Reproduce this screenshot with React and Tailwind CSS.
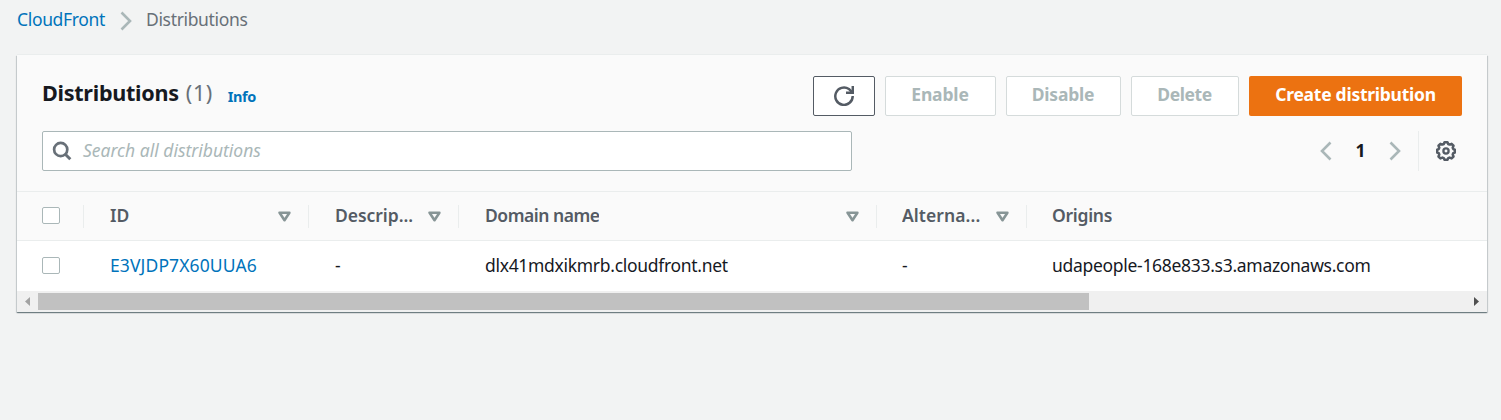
function Chevron({ left = false }) {
  return (
    <svg viewBox="0 0 12 20" className="h-5 w-3 shrink-0" fill="none" stroke="#aab7b8" strokeWidth="2.600">
      <path d={left ? "M10.500 1.500 2 10l8.500 8.500" : "M1.500 1.500 10 10l-8.500 8.500"} />
    </svg>
  );
}

function RefreshIcon() {
  return (
    <svg viewBox="0 0 20 20" className="size-5" fill="none" stroke="#545b64" strokeWidth="2.500">
      <path d="M18.700 10A8.700 8.700 0 1 1 14.900 3L18 6.200" />
      <path d="M18.800 0v6.750H12" />
    </svg>
  );
}

function SearchIcon() {
  return (
    <svg viewBox="0 0 20 20" className="-ml-px size-5 shrink-0" fill="none" stroke="#687078" strokeWidth="2.700">
      <circle cx="8.700" cy="8.500" r="6.600" />
      <path d="m13.300 13.200 5 5" strokeWidth="3" />
    </svg>
  );
}

function GearIcon() {
  return (
    <svg viewBox="0 0 20 20" className="size-5" fill="none" stroke="#545b64" strokeWidth="2.500" strokeLinejoin="round">
      <path d="M8.500 1.300h3l.7 1.700 1.400.6 2-.8 1.900 1.900-.8 2 .6 1.400 1.500.6v2.800l-1.500.6-.6 1.400.8 2-1.900 1.900-2-.8-1.400.6-.7 1.600h-3l-.7-1.600-1.400-.6-2 .8-1.900-1.900.8-2-.6-1.400-1.500-.6V8.700l1.500-.6.6-1.400-.8-2 1.900-1.900 2 .8 1.400-.6z" />
      <circle cx="10" cy="10" r="2.600" strokeWidth="2.300" />
    </svg>
  );
}

function SortIcon() {
  return (
    <svg viewBox="0 0 13 11" className="h-[11px] w-[13px] shrink-0" fill="none" stroke="#879596" strokeWidth="2.600" strokeLinejoin="round">
      <path d="M1.600 1.700h9.800L6.500 9.200z" />
    </svg>
  );
}

function Checkbox() {
  return <span className="block h-[17px] w-[18px] rounded-[2px] border border-[#aab7b8] bg-white" />;
}

function Header({ children, sortable = true, padding = "pl-[26px]" }) {
  return (
    <div className={`flex h-[23px] items-center justify-between border-l border-[#eaeded] pr-[17px] text-[#545b64] ${padding}`}>
      <span className="-mt-0.5 truncate font-semibold">{children}</span>
      {sortable && <SortIcon />}
    </div>
  );
}

function DisabledButton({ className, children }) {
  return (
    <button className={`h-10 rounded-[2px] border border-[#d5dbdb] bg-white pr-px pb-1 text-center font-bold text-[#aab7b8] ${className}`}>
      {children}
    </button>
  );
}

const columns = "grid grid-cols-[66px_225px_150px_418px_150px_1fr] items-center";

export default function App() {
  return (
    <main className="h-[420px] bg-[#f2f3f3] pr-[14px] pl-[17px] font-['Noto_Sans',sans-serif] text-[17.5px] leading-6 whitespace-nowrap text-[#16191f]">
      <nav className="flex h-[55px] items-start pt-[7px]">
        <a className="w-[103px] tracking-[-0.34px] text-[#0073bb]">CloudFront</a>
        <span className="mt-1 w-[26px]"><Chevron /></span>
        <span className="tracking-[-0.34px] text-[#687078]">Distributions</span>
      </nav>

      <section className="h-[257px] bg-white shadow-[0_1px_1px_0_rgba(0,28,36,0.4),1px_1px_1px_0_rgba(0,28,36,0.12),-1px_1px_1px_0_rgba(0,28,36,0.12),0_-1px_0_0_#eaeded]">
        <header className="h-[137px] border-b border-[#eaeded] bg-[#fafafa] pt-[21px] pr-[25px] pl-[25px]">
          <div className="flex h-10 justify-between">
            <div className="flex items-baseline pt-[3px]">
              <h1 className="text-[21.6px] leading-7 font-bold tracking-[-0.28px]">Distributions</h1>
              <span className="ml-[7px] w-[42px] text-[21.6px] leading-7 tracking-[0.6px] text-[#687078]">(1)</span>
              <a className="relative top-px text-[14.500px] font-bold tracking-[-0.4px] text-[#0073bb]">Info</a>
            </div>
            <div className="flex gap-[10px]">
              <button className="flex h-10 w-[62px] items-center justify-center rounded-[2px] border border-[#545b64] bg-white">
                <RefreshIcon />
              </button>
              <DisabledButton className="w-[111px] tracking-[-0.15px]">Enable</DisabledButton>
              <DisabledButton className="w-[115px] tracking-[-0.2px]">Disable</DisabledButton>
              <DisabledButton className="w-[108px] tracking-[-0.4px]">Delete</DisabledButton>
              <button className="h-10 w-[213px] rounded-[2px] bg-[#ec7211] pb-1 text-center font-bold tracking-[-0.26px] text-white">
                Create distribution
              </button>
            </div>
          </div>
          <div className="mt-[15px] flex h-10 justify-between">
            <div className="flex w-[810px] items-center gap-[11px] rounded-[2px] border border-[#aab7b8] bg-white pl-[10px]">
              <SearchIcon />
              <span className="pb-0.5 text-[#aab7b8] italic">Search all distributions</span>
            </div>
            <div className="flex items-center">
              <Chevron left />
              <span className="w-[57px] pb-[3px] text-center font-bold">1</span>
              <Chevron />
              <span className="ml-[17px] flex h-full items-center border-l border-[#eaeded] pr-[6px] pl-[17px]">
                <GearIcon />
              </span>
            </div>
          </div>
        </header>

        <div className={`${columns} h-[49px] border-b border-[#eaeded] bg-[#fafafa]`}>
          <div className="-mt-px pl-[25px]"><Checkbox /></div>
          <Header>ID</Header>
          <Header><span className="tracking-[-0.04px]">Descrip...</span></Header>
          <Header><span className="tracking-[-0.48px]">Domain name</span></Header>
          <Header padding="pl-[25px]"><span className="tracking-[0.080px]">Alterna...</span></Header>
          <Header padding="pl-[25px]" sortable={false}><span className="tracking-[-0.28px]">Origins</span></Header>
        </div>

        <div className={`${columns} h-[50px]`}>
          <div className="-mt-px pl-[25px]"><Checkbox /></div>
          <a className="pb-[3px] pl-[27px] tracking-[0.12px] text-[#0073bb]">E3VJDP7X60UUA6</a>
          <span className="pb-0.5 pl-[27px]">-</span>
          <span className="pb-[3px] pl-[27px] tracking-[-0.3px]">dlx41mdxikmrb.cloudfront.net</span>
          <span className="pb-0.5 pl-[26px]">-</span>
          <span className="pb-[3px] pl-[26px] tracking-[-0.3px]">udapeople-168e833.s3.amazonaws.com</span>
        </div>

        <div className="flex h-[21px] items-center justify-between bg-[#f0f0f0] pr-[8px] pl-[8px]">
          <div className="flex items-center">
            <svg viewBox="0 0 5 9" className="mr-2 h-[9px] w-[5px]" fill="#a3a3a3"><path d="M5 0v9L0 4.500z" /></svg>
            <span className="block h-[17px] w-[1051px] bg-[#c1c1c1]" />
          </div>
          <svg viewBox="0 0 5 9" className="h-[9px] w-[5px]" fill="#505050"><path d="M0 0v9l5-4.500z" /></svg>
        </div>
      </section>
    </main>
  );
}
